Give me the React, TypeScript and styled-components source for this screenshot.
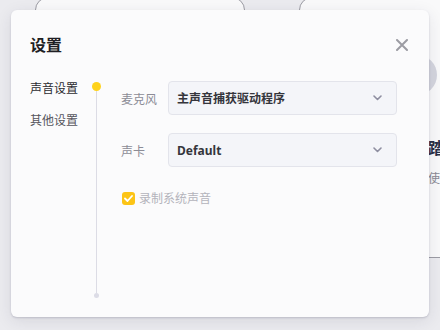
import React from "react";
import styled, { createGlobalStyle } from "styled-components";

const GlobalStyle = createGlobalStyle`
  html, body { margin: 0; padding: 0; }
  body {
    background: #ebebef;
    font-family: "Noto Sans", "Noto Sans CJK SC", sans-serif;
    -webkit-font-smoothing: antialiased;
  }
`;

const Page = styled.div`
  position: relative;
  width: 440px;
  height: 330px;
  overflow: hidden;
  background: #ebebef;
`;

const CardsRow = styled.div`
  display: flex;
  align-items: flex-start;
  gap: 54px;
  padding-left: 35px;
  margin-top: -3px;
`;

const BgCard = styled.div<{ $w: number; $h: number }>`
  box-sizing: border-box;
  width: ${(p) => p.$w}px;
  height: ${(p) => p.$h}px;
  flex-shrink: 0;
  background: #f9f9fa;
  border: 1.5px solid #9c9ca4;
  border-radius: 13px;
`;

const CardBody = styled.div`
  display: flex;
  flex-direction: column;
  padding: 57px 0 0 97px;
`;

const Avatar = styled.div`
  width: 40px;
  height: 40px;
  border-radius: 50%;
  background: #d4d5de;
`;

const CardName = styled.div`
  margin: 43px 0 0 31px;
  font-size: 16px;
  font-weight: 700;
  line-height: 20px;
  color: #2a2f45;
  white-space: nowrap;
`;

const CardDesc = styled.div`
  margin: 13px 0 0 31px;
  font-size: 12px;
  line-height: 16px;
  color: #8a8a94;
  white-space: nowrap;
`;

const Modal = styled.div`
  position: absolute;
  left: 11px;
  top: 10px;
  width: 418px;
  height: 307px;
  box-sizing: border-box;
  background: #fbfbfc;
  border-radius: 6px;
  box-shadow: 0 1px 2px rgba(40, 40, 70, 0.18), 0 4px 16px rgba(40, 40, 70, 0.1);
  display: flex;
  flex-direction: column;
  padding: 24px 21px 19px 19px;
`;

const Header = styled.div`
  display: flex;
  align-items: center;
  justify-content: space-between;
  height: 20px;
`;

const Title = styled.div`
  font-family: "Noto Sans CJK SC", sans-serif;
  font-size: 16px;
  font-weight: 700;
  line-height: 20px;
  color: #1f1f24;
`;

const CloseButton = styled.button`
  border: 0;
  background: transparent;
  padding: 0;
  width: 12px;
  height: 12px;
  margin-top: 2px;
  display: flex;
  cursor: pointer;
`;

const Body = styled.div`
  flex: 1;
  display: flex;
  margin-top: 24px;
`;

const Nav = styled.div`
  width: 62px;
  display: flex;
  flex-direction: column;
  gap: 12px;
`;

const NavItem = styled.div<{ $active?: boolean }>`
  font-family: "Noto Sans CJK SC", sans-serif;
  font-size: 12px;
  line-height: 20px;
  color: ${(p) => (p.$active ? "#2b2b30" : "#55555c")};
`;

const Timeline = styled.div`
  width: 9px;
  display: flex;
  flex-direction: column;
  align-items: center;
  margin-top: 4px;
`;

const ActiveDot = styled.div`
  width: 9px;
  height: 9px;
  border-radius: 50%;
  background: #fed21b;
  flex-shrink: 0;
`;

const Line = styled.div`
  flex: 1;
  width: 1px;
  background: #dcdce5;
`;

const EndDot = styled.div`
  width: 5px;
  height: 5px;
  border-radius: 50%;
  background: #dcdce6;
  flex-shrink: 0;
`;

const Form = styled.div`
  display: flex;
  flex-direction: column;
  margin: 3px 0 0 20px;
`;

const Row = styled.div<{ $gap?: number }>`
  display: flex;
  align-items: center;
  margin-top: ${(p) => p.$gap ?? 0}px;
`;

const Label = styled.div`
  width: 47px;
  font-family: "Noto Sans CJK SC", sans-serif;
  font-size: 12px;
  line-height: 16px;
  color: #8c8c96;
  padding-top: 2px;
`;

const Select = styled.div`
  box-sizing: border-box;
  width: 229px;
  height: 34px;
  display: flex;
  align-items: center;
  justify-content: space-between;
  padding: 0 14px 0 8px;
  background: #f4f5f9;
  border: 1.5px solid #e3e4eb;
  border-radius: 4px;
`;

const SelectValue = styled.span`
  font-family: "Noto Sans", "Noto Sans CJK SC", sans-serif;
  font-size: 12px;
  font-weight: 700;
  color: #35353c;
`;

const CheckRow = styled.label`
  display: flex;
  align-items: center;
  gap: 4px;
  margin-top: 23px;
  margin-left: 1px;
`;

const CheckBox = styled.span`
  width: 13px;
  height: 13px;
  border-radius: 3px;
  background: #fcc416;
  display: flex;
  align-items: center;
  justify-content: center;
`;

const CheckText = styled.span`
  font-family: "Noto Sans CJK SC", sans-serif;
  font-size: 12px;
  line-height: 16px;
  color: #b3b3bb;
`;

const Chevron = () => (
  <svg width="9" height="6" viewBox="0 0 9 6">
    <polyline points="1,1 4.5,4.5 8,1" fill="none" stroke="#8e8ea0" strokeWidth="1.6" strokeLinecap="round" strokeLinejoin="round" />
  </svg>
);

export default function App() {
  return (
    <>
      <GlobalStyle />
      <Page>
        <CardsRow>
          <BgCard $w={210} $h={300} />
          <BgCard $w={200} $h={261}>
            <CardBody>
              <Avatar />
              <CardName>踏青</CardName>
              <CardDesc>使用说明</CardDesc>
            </CardBody>
          </BgCard>
        </CardsRow>
        <Modal>
          <Header>
            <Title>设置</Title>
            <CloseButton aria-label="关闭">
              <svg width="12" height="12" viewBox="0 0 12 12">
                <path d="M1 1 L11 11 M11 1 L1 11" stroke="#9c9ca3" strokeWidth="2" strokeLinecap="round" />
              </svg>
            </CloseButton>
          </Header>
          <Body>
            <Nav>
              <NavItem $active>声音设置</NavItem>
              <NavItem>其他设置</NavItem>
            </Nav>
            <Timeline>
              <ActiveDot />
              <Line />
              <EndDot />
            </Timeline>
            <Form>
              <Row>
                <Label>麦克风</Label>
                <Select>
                  <SelectValue>主声音捕获驱动程序</SelectValue>
                  <Chevron />
                </Select>
              </Row>
              <Row $gap={18}>
                <Label>声卡</Label>
                <Select>
                  <SelectValue>Default</SelectValue>
                  <Chevron />
                </Select>
              </Row>
              <CheckRow>
                <CheckBox>
                  <svg width="9" height="7" viewBox="0 0 9 7">
                    <polyline points="1,3.5 3.5,6 8,1" fill="none" stroke="#fff" strokeWidth="1.8" strokeLinecap="round" strokeLinejoin="round" />
                  </svg>
                </CheckBox>
                <CheckText>录制系统声音</CheckText>
              </CheckRow>
            </Form>
          </Body>
        </Modal>
      </Page>
    </>
  );
}
